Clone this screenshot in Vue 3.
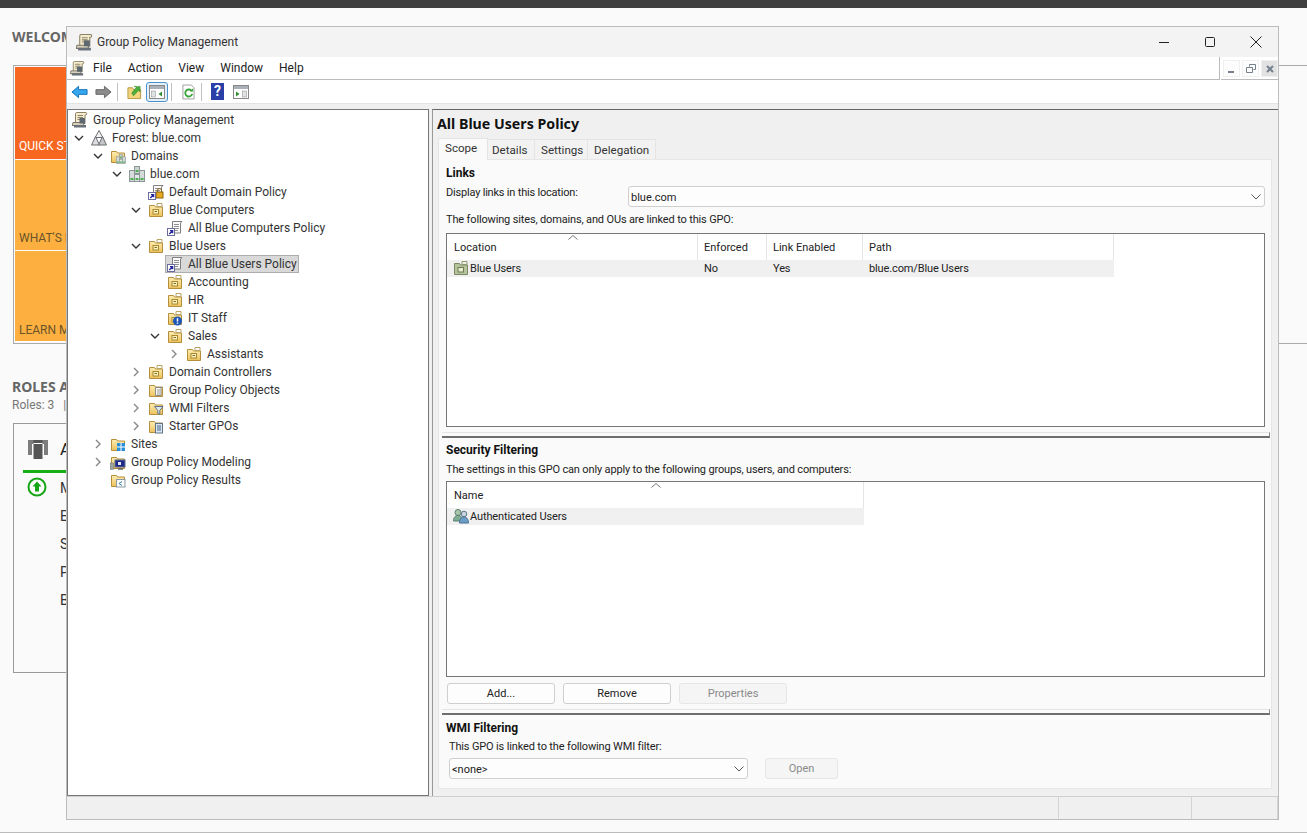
<script setup>
const tree = [
  { l: 0, t: 'Group Policy Management', i: 'scroll', c: '' },
  { l: 1, t: 'Forest: blue.com', i: 'forest', c: 'open' },
  { l: 2, t: 'Domains', i: 'domfolder', c: 'open' },
  { l: 3, t: 'blue.com', i: 'domain', c: 'open' },
  { l: 4, t: 'Default Domain Policy', i: 'gpolock', c: '' },
  { l: 4, t: 'Blue Computers', i: 'ou', c: 'open' },
  { l: 5, t: 'All Blue Computers Policy', i: 'gpo', c: '' },
  { l: 4, t: 'Blue Users', i: 'ou', c: 'open' },
  { l: 5, t: 'All Blue Users Policy', i: 'gpo', c: '', sel: true },
  { l: 5, t: 'Accounting', i: 'ou', c: '' },
  { l: 5, t: 'HR', i: 'ou', c: '' },
  { l: 5, t: 'IT Staff', i: 'ouwarn', c: '' },
  { l: 5, t: 'Sales', i: 'ou', c: 'open' },
  { l: 6, t: 'Assistants', i: 'ou', c: 'closed' },
  { l: 4, t: 'Domain Controllers', i: 'ou', c: 'closed' },
  { l: 4, t: 'Group Policy Objects', i: 'gpofolder', c: 'closed' },
  { l: 4, t: 'WMI Filters', i: 'wmi', c: 'closed' },
  { l: 4, t: 'Starter GPOs', i: 'starter', c: 'closed' },
  { l: 2, t: 'Sites', i: 'sites', c: 'closed' },
  { l: 2, t: 'Group Policy Modeling', i: 'modeling', c: 'closed' },
  { l: 2, t: 'Group Policy Results', i: 'results', c: '' }
]
const menus = ['File', 'Action', 'View', 'Window', 'Help']
const rowIndent = (l) => ({ paddingLeft: 4 + 19 * l + 'px' })
const roleItems = ['Manageability', 'Events', 'Services', 'Performance', 'BPA results']
</script>

<template>
  <div class="desktop">
    <svg class="sprite" width="0" height="0" aria-hidden="true">
      <defs>
        <linearGradient id="fold" x1="0" y1="0" x2="0" y2="1"><stop offset="0" stop-color="#fdeeb4"/><stop offset="1" stop-color="#ecc15c"/></linearGradient>
        <symbol id="folderBase" viewBox="0 0 16 16">
          <path d="M1.5 3.5h5l1 1.5h7v9.500h-13z" fill="url(#fold)" stroke="#b58f3c"/>
        </symbol>
        <symbol id="scroll" viewBox="0 0 16 16">
          <path d="M4.500 .5h9.500c1 0 1 2.500 0 2.500h-1v8.500h-9.500V3c0-1.500 0-2.500 1-2.500z" fill="#f5ecd0" stroke="#8d8468"/>
          <path d="M5.500 3.500h5.500M5.500 5.500h5.500M5.500 7.500h3" stroke="#8d8468"/>
          <path d="M1 10.500h10l1 3H0z" fill="#d8d2bb" stroke="#7c766a"/>
          <rect x="7.500" y="6" width="5.500" height="5.500" fill="#5d6770"/>
          <rect x="2" y="13" width="12" height="2.500" fill="#68707a"/>
        </symbol>
        <symbol id="forest" viewBox="0 0 16 16">
          <path d="M8 .5l3.800 7h-7.600z" fill="#f2f2f2" stroke="#6d6e72"/>
          <path d="M4.500 6.500l4 8.500H.5z" fill="#dcdde0" stroke="#6d6e72"/>
          <path d="M11.500 6.500l4 8.500h-8z" fill="#c4c5c9" stroke="#6d6e72"/>
        </symbol>
        <symbol id="servers" viewBox="0 0 16 16">
          <rect x="5.500" y=".5" width="5" height="7" fill="#cdd3d3" stroke="#8b9696"/>
          <rect x=".5" y="4.500" width="5" height="11" fill="#d5dbdb" stroke="#8b9696"/>
          <rect x="10.500" y="4.500" width="5" height="11" fill="#d5dbdb" stroke="#8b9696"/>
          <rect x="5.500" y="8.500" width="5" height="7" fill="#e2e7e7" stroke="#8b9696"/>
          <path d="M6.500 5h3M1.500 13h3M11.500 13h3M6.500 13h3" stroke="#4fae4f" stroke-width="2"/>
        </symbol>
        <symbol id="docBits" viewBox="0 0 16 16">
          <path d="M5.500 1.500h9.500l-1.500 1.500v10h-8z" fill="#fbfbfb" stroke="#7f7f7f"/>
          <path d="M7 4.500h5M7 6.500h5M7 8.500h5M7 10.500h4" stroke="#8f8f8f"/>
        </symbol>
        <symbol id="shortcut" viewBox="0 0 16 16">
          <rect x=".5" y="8.500" width="7" height="7" fill="#fff" stroke="#6c6c9c"/>
          <path d="M2.300 14l3-3M3 10.700h2.600v2.600" fill="none" stroke="#23239b" stroke-width="1.300"/>
        </symbol>
        <symbol id="ouPaper" viewBox="0 0 16 16">
          <rect x="5" y="7.500" width="5.500" height="4.500" fill="#fdf1bd" stroke="#a7882f"/>
          <path d="M6.500 9.500h2.500" stroke="#7f6a25"/>
          <path d="M9 1.500h5v3h-5z" fill="#fff" stroke="#b9a465"/>
        </symbol>
      </defs>
    </svg>

    <div class="topbar"></div>

    <main class="server-manager">
      <h2 class="sm-heading">WELCOME TO SERVER MANAGER</h2>
      <section class="welcome">
        <div class="tile orange">QUICK START</div>
        <div class="tile amber">WHAT'S NEW</div>
        <div class="tile amber last">LEARN MORE</div>
      </section>
      <h2 class="sm-heading roles-head">ROLES AND SERVER GROUPS</h2>
      <div class="roles-sub">Roles: 3 &nbsp;&nbsp;|&nbsp; Server groups: 1 &nbsp;|&nbsp; Servers total: 1</div>
      <section class="role-card">
        <div class="role-title">
          <svg class="role-icon" viewBox="0 0 20 20" width="20" height="20">
            <path d="M0 1h20v15h-4V5H4v11H0z" fill="#7c7c7c"/>
            <rect x="5.500" y="1" width="9" height="19" fill="#555"/>
            <rect x="5.500" y="4" width="9" height="1" fill="#fff"/>
          </svg>
          <span>AD DS</span>
        </div>
        <div class="role-rule"></div>
        <div class="role-items">
          <svg class="role-up" viewBox="0 0 20 20" width="20" height="20">
            <circle cx="10" cy="10" r="8.500" fill="#fff" stroke="#16a516" stroke-width="2"/>
            <path d="M10 4.500l4.500 5H12v5H8v-5H5.500z" fill="#16a516"/>
          </svg>
          <div class="role-list">
            <div v-for="r in roleItems" :key="r" class="role-item">{{ r }}</div>
          </div>
        </div>
      </section>
    </main>

    <div class="window">
      <header class="titlebar">
        <svg class="ic title-ic" viewBox="0 0 16 16"><use href="#scroll"/></svg>
        <span class="title-text">Group Policy Management</span>
        <div class="win-btns">
          <svg width="12" height="12" viewBox="0 0 12 12"><path d="M1 6.500h10" stroke="#222"/></svg>
          <svg width="12" height="12" viewBox="0 0 12 12"><rect x="1.500" y="1.500" width="9" height="9" rx="1" fill="none" stroke="#222"/></svg>
          <svg width="12" height="12" viewBox="0 0 12 12"><path d="M.5.500l11 11M11.500.500l-11 11" stroke="#222"/></svg>
        </div>
      </header>

      <div class="menubar">
        <nav class="menu-left">
          <svg class="ic menu-ic" viewBox="0 0 16 16"><use href="#scroll"/></svg>
          <span v-for="m in menus" :key="m" class="menu-item">{{ m }}</span>
        </nav>
        <div class="mdi">
          <span class="mdi-btn"><svg width="10" height="10" viewBox="0 0 10 10"><rect x="1" y="7" width="6" height="2" fill="#76808c"/></svg></span>
          <span class="mdi-btn"><svg width="10" height="10" viewBox="0 0 10 10"><path d="M3.500 2.500V.5h6v5h-2M.5 3.500h6v5h-6z" fill="none" stroke="#76808c"/></svg></span>
          <span class="mdi-btn dim"><svg width="10" height="10" viewBox="0 0 10 10"><path d="M2 2l6 6M8 2l-6 6" stroke="#76808c" stroke-width="2"/></svg></span>
        </div>
      </div>

      <div class="toolbar">
        <svg class="tb" width="17" height="16" viewBox="0 0 18 16"><path d="M1 8l7-6v3.500h9v5H8V14z" fill="#35a7ee" stroke="#0f6fb5"/></svg>
        <svg class="tb tb-fwd" width="17" height="16" viewBox="0 0 18 16"><path d="M17 8l-7-6v3.500H1v5h9V14z" fill="#8c8c8c" stroke="#666"/></svg>
        <i class="tb-sep"></i>
        <svg class="tb tb-up" width="15" height="16" viewBox="0 0 16 16"><path d="M1 3.500h5l1 2h7.500v9.500H1z" fill="#f3d67c" stroke="#b5963f"/><path d="M5 9l5-6-2.500-1H14v6l-1.500-2L7 12z" fill="#4caf3c" stroke="#2b7d22" stroke-width=".5"/></svg>
        <span class="tb-toggle">
          <svg width="16" height="14" viewBox="0 0 16 14"><rect x=".5" y=".5" width="15" height="13" fill="#fff" stroke="#888"/><rect x="1" y="1" width="14" height="3" fill="#a9b0b8"/><rect x="2.500" y="6" width="4" height="6" fill="#dfe3e3" stroke="#888" stroke-width=".5"/><path d="M13 6.500v5l-3.500-2.500z" fill="#2f8f2f"/></svg>
        </span>
        <i class="tb-sep sep-b"></i>
        <svg class="tb tb-ref" width="13" height="16" viewBox="0 0 14 16"><path d="M1 .5h9l3 3v12H1z" fill="#fff" stroke="#9a9a9a"/><path d="M10.500 7a3.800 3.800 0 1 0 .5 3" fill="none" stroke="#3aa53a" stroke-width="2"/><path d="M8.500 7.500h3.500V4z" fill="#3aa53a"/></svg>
        <i class="tb-sep sep-c"></i>
        <span class="tb-help">?</span>
        <svg class="tb tb-act" width="16" height="14" viewBox="0 0 16 14"><rect x=".5" y=".5" width="15" height="13" fill="#fff" stroke="#888"/><rect x="1" y="1" width="14" height="3" fill="#a9b0b8"/><rect x="9.500" y="6" width="4" height="6" fill="#dfe3e3" stroke="#888" stroke-width=".5"/><path d="M3 6.500v5l3.500-2.500z" fill="#2f8f2f"/></svg>
      </div>

      <div class="main">
        <aside class="tree">
          <div v-for="n in tree" :key="n.t" class="tree-row" :style="rowIndent(n.l)">
            <span class="chev">
              <svg v-if="n.c === 'open'" width="10" height="10" viewBox="0 0 10 10"><path d="M1 3l4 4 4-4" fill="none" stroke="#333" stroke-width="1.400"/></svg>
              <svg v-else-if="n.c === 'closed'" width="10" height="10" viewBox="0 0 10 10"><path d="M3 1l4 4-4 4" fill="none" stroke="#888" stroke-width="1.400"/></svg>
            </span>
            <span class="node" :class="{ selected: n.sel }">
              <svg class="ic" viewBox="0 0 16 16">
                <template v-if="n.i === 'scroll'"><use href="#scroll"/></template>
                <template v-else-if="n.i === 'forest'"><use href="#forest"/></template>
                <template v-else-if="n.i === 'domfolder'"><use href="#folderBase"/><g transform="translate(6 6) scale(.62)"><use href="#servers" width="16" height="16"/></g></template>
                <template v-else-if="n.i === 'domain'"><use href="#servers"/></template>
                <template v-else-if="n.i === 'gpolock'">
                  <use href="#docBits"/><rect x="8" y="8" width="7" height="6" fill="#e6a91f" stroke="#8a6510"/><path d="M9.500 8V6.500a2 2 0 0 1 4 0V8" fill="none" stroke="#8a6510"/><use href="#shortcut"/>
                </template>
                <template v-else-if="n.i === 'gpo'"><use href="#docBits"/><use href="#shortcut"/></template>
                <template v-else-if="n.i === 'ou'"><use href="#folderBase"/><use href="#ouPaper"/></template>
                <template v-else-if="n.i === 'ouwarn'">
                  <use href="#folderBase"/><use href="#ouPaper"/><circle cx="10.500" cy="11" r="4.500" fill="#1e56b8"/><path d="M10.500 8.300v3.200M10.500 12.500v1.200" stroke="#fff" stroke-width="1.500"/>
                </template>
                <template v-else-if="n.i === 'gpofolder'"><use href="#folderBase"/><path d="M7.500 5.500h6.500l-1 1v7h-5.500z" fill="#fafafa" stroke="#8b8b8b"/><path d="M9 8h3M9 10h3M9 12h3" stroke="#999"/></template>
                <template v-else-if="n.i === 'wmi'"><use href="#folderBase"/><path d="M6.500 6.500h8.500l-3.200 4v4l-2-1v-3z" fill="#dfe6ec" stroke="#5f7489"/></template>
                <template v-else-if="n.i === 'starter'"><use href="#folderBase"/><rect x="7.500" y="5.500" width="7" height="9.500" fill="#dbe7f4" stroke="#5f7489"/><path d="M9 8h4M9 10h4M9 12h4" stroke="#45627f"/></template>
                <template v-else-if="n.i === 'sites'"><use href="#folderBase"/><rect x="7" y="7" width="8" height="8" fill="#2a8fd6"/><path d="M11 7v8M7 11h8" stroke="#fff"/></template>
                <template v-else-if="n.i === 'modeling'">
                  <use href="#folderBase"/><rect x="0" y="9" width="3.500" height="6.500" fill="#9aa5a0" stroke="#6a7570" stroke-width=".5"/><rect x="5" y="6" width="10" height="7" fill="#1d2a8a" stroke="#5e6d8e"/><path d="M8 15h5" stroke="#666" stroke-width="1.500"/><rect x="8" y="8" width="3" height="3" fill="#e9e9f6"/>
                </template>
                <template v-else-if="n.i === 'results'"><use href="#folderBase"/><rect x="6.500" y="7.500" width="8.500" height="7.500" fill="#fbfbfb" stroke="#8b99a6"/><path d="M12 9.500l-3 2 3 2" fill="none" stroke="#2f7fa9"/></template>
              </svg>
              <span class="node-text">{{ n.t }}</span>
            </span>
          </div>
        </aside>

        <div class="vsplit"></div>

        <section class="detail">
          <h1 class="detail-title">All Blue Users Policy</h1>
          <div class="tabs">
            <span class="tab active">Scope</span>
            <span class="tab t-details">Details</span>
            <span class="tab t-settings">Settings</span>
            <span class="tab t-deleg">Delegation</span>
          </div>
          <div class="panel">
            <h3 class="sec-title sec-links">Links</h3>
            <div class="display-row">
              <span class="display-label">Display links in this location:</span>
              <div class="combo combo-wide">
                <span>blue.com</span>
                <svg width="10" height="6" viewBox="0 0 10 6"><path d="M.5.500L5 5l4.500-4.500" fill="none" stroke="#555"/></svg>
              </div>
            </div>
            <p class="sec-text t-links">The following sites, domains, and OUs are linked to this GPO:</p>
            <div class="listbox links-box">
              <div class="lhead links-cols">
                <span class="col sort">Location<svg class="caret caret-a" width="10" height="5" viewBox="0 0 10 5"><path d="M.5 4.500L5 .5l4.500 4" fill="none" stroke="#777"/></svg></span>
                <span class="col">Enforced</span>
                <span class="col">Link Enabled</span>
                <span class="col">Path</span>
              </div>
              <div class="lrow links-cols">
                <span class="cell cell-ic">
                  <svg class="ic" viewBox="0 0 16 16"><path d="M1.500 3.500h5l1 1.500h7v9.500h-13z" fill="#b5c49a" stroke="#7c8763"/><rect x="5" y="7.500" width="5.500" height="4.500" fill="#e5ecd2" stroke="#6d7a52"/><path d="M9 1.500h5v3h-5z" fill="#eef2e2" stroke="#8e9a74"/></svg>
                  <span>Blue Users</span>
                </span>
                <span class="cell">No</span>
                <span class="cell">Yes</span>
                <span class="cell">blue.com/Blue Users</span>
              </div>
            </div>

            <div class="hsplit split-a"></div>

            <h3 class="sec-title sec-sec">Security Filtering</h3>
            <p class="sec-text t-sec">The settings in this GPO can only apply to the following groups, users, and computers:</p>
            <div class="listbox sec-box">
              <div class="lhead name-cols">
                <span class="col sort">Name<svg class="caret caret-b" width="10" height="5" viewBox="0 0 10 5"><path d="M.5 4.500L5 .5l4.500 4" fill="none" stroke="#777"/></svg></span>
              </div>
              <div class="lrow name-cols">
                <span class="cell cell-ic">
                  <svg class="ic" viewBox="0 0 16 16"><circle cx="5" cy="4.500" r="3" fill="#a9c6a9" stroke="#5b7f73"/><path d="M.5 13c0-4 2-5.500 4.500-5.500S9.500 9 9.500 13z" fill="#7fae94" stroke="#5b7f73"/><circle cx="11" cy="6" r="2.800" fill="#c9d3dd" stroke="#5d7688"/><path d="M6.500 15c0-4 2-6 4.500-6s4.500 2 4.500 6z" fill="#6c9dc9" stroke="#4c7090"/></svg>
                  <span>Authenticated Users</span>
                </span>
              </div>
            </div>
            <div class="btn-row">
              <span class="btn">Add...</span>
              <span class="btn">Remove</span>
              <span class="btn off">Properties</span>
            </div>

            <div class="hsplit split-b"></div>

            <h3 class="sec-title sec-wmi">WMI Filtering</h3>
            <p class="sec-text t-wmi">This GPO is linked to the following WMI filter:</p>
            <div class="wmi-row">
              <div class="combo combo-wmi">
                <span>&lt;none&gt;</span>
                <svg width="10" height="6" viewBox="0 0 10 6"><path d="M.5.500L5 5l4.500-4.500" fill="none" stroke="#555"/></svg>
              </div>
              <span class="btn off open-btn">Open</span>
            </div>
          </div>
        </section>
      </div>

      <footer class="status">
        <i class="st st-a"></i><i class="st st-b"></i><i class="st st-c"></i>
      </footer>
    </div>

    <div class="page-end"></div>
  </div>
</template>

<style>
html, body { margin: 0; background: #fafafa; }
</style>

<style scoped>
* { box-sizing: border-box; }
.desktop {
  position: relative;
  width: 1307px;
  height: 833px;
  overflow: hidden;
  background: #fafafa;
  font-family: Roboto, "Noto Sans", sans-serif;
  font-size: 12px;
  color: #222;
}
.sprite { position: absolute; }
.topbar { height: 8px; background: #3f3f3f; }
.page-end { position: absolute; left: 0; right: 0; bottom: 0; height: 1px; background: #bbb; }

.server-manager { padding: 20px 0 0 12px; }
.sm-heading {
  margin: 0;
  height: 18px;
  line-height: 18px;
  font-family: "Noto Sans", sans-serif;
  font-size: 14px;
  font-weight: 700;
  color: #666;
  white-space: nowrap;
}
.welcome {
  margin: 19px 0 0 1px;
  width: 1400px;
  height: 279px;
  padding: 1px 0 1px 1px;
  border: 1px solid #aaa;
  border-right: 0;
  background: #fafafa;
}
.tile {
  width: 300px;
  height: 92px;
  padding: 71px 0 0 4px;
  line-height: 16px;
  font-size: 12px;
  color: #444;
}
.tile.orange { background: #f76720; color: #fff; }
.tile.amber { background: #fdb040; margin-top: 1px; color: #6b5328; height: 90px; padding-top: 70px; }
.tile.amber.last { padding-top: 71px; }
.roles-head { margin-top: 34px; }
.roles-sub { height: 18px; line-height: 18px; color: #777; font-size: 12px; white-space: nowrap; }
.role-card {
  margin: 9px 0 0 1px;
  width: 420px;
  height: 250px;
  border: 1px solid #999;
  padding: 14px 0 0 9px;
}
.role-title { display: flex; align-items: center; height: 22px; padding-left: 5px; font-size: 17px; color: #222; }
.role-title span { margin-left: 12px; }
.role-rule { margin-top: 10px; height: 3px; background: #16b016; width: 300px; }
.role-items { display: flex; padding: 2px 0 0 4px; }
.role-up { margin-top: 2px; }
.role-list { margin-left: 13px; margin-top: -1px; }
.role-item { height: 28px; line-height: 28px; font-size: 14px; color: #333; }

.window {
  position: absolute;
  left: 66px;
  top: 26px;
  width: 1213px;
  height: 794px;
  display: flex;
  flex-direction: column;
  border: 1px solid #bcbcbc;
  background: #f0f0f0;
}
.ic { width: 16px; height: 16px; flex: none; }
.titlebar { height: 30px; flex: none; display: flex; align-items: center; background: #f3f3f3; padding-left: 9px; }
.title-ic { width: 17px; height: 17px; }
.title-text { margin-left: 4px; color: #333; }
.win-btns { margin-left: auto; display: flex; gap: 34px; padding-right: 16px; }
.menubar { height: 23px; flex: none; display: flex; background: #fff; }
.menu-left { width: 1153px; display: flex; align-items: center; padding: 0 0 0 3px; background: #fff; border-right: 1px solid #bbb; border-bottom: 1px solid #bbb; }
.menu-ic { width: 15px; height: 15px; margin-right: 8px; }
.menu-item { margin-right: 16px; }
.mdi { flex: 1; display: flex; gap: 2px; padding: 3px 0 2px 2px; background: #fff; border-bottom: 1px solid #bbb; margin-left: 1px; }
.mdi-btn { width: 17px; height: 17px; display: flex; align-items: center; justify-content: center; background: #fdfdfd; box-shadow: inset 0 0 0 1px #f0f0f0; }
.mdi-btn.dim { background: #e2e2e2; }
.toolbar { height: 24px; flex: none; display: flex; align-items: center; padding-left: 4px; background: #fff; border-bottom: 1px solid #e4e4e4; }
.tb { flex: none; }
.tb-fwd { margin-left: 7px; }
.tb-sep { width: 1px; height: 18px; background: #c0c0c0; margin-left: 5px; }
.tb-up { margin-left: 9px; }
.tb-toggle { width: 22px; height: 20px; margin-left: 4px; display: flex; align-items: center; justify-content: center; background: #e3f0fb; border: 1px solid #4a92cf; border-radius: 3px; }
.sep-b { margin-left: 3px; }
.tb-ref { margin-left: 10px; }
.sep-c { margin-left: 6px; }
.tb-help { width: 13px; height: 17px; margin-left: 9px; background: #2a3fa8; color: #fff; font-weight: 700; font-size: 14px; line-height: 17px; text-align: center; }
.tb-act { margin-left: 9px; }

.main { flex: 1; min-height: 0; display: flex; margin-top: 5px; }
.tree { width: 362px; flex: none; background: #fff; border: 1px solid #777; padding-top: 1px; }
.tree-row { display: flex; align-items: center; height: 18px; white-space: nowrap; }
.chev { width: 0; display: flex; justify-content: center; align-items: center; position: relative; left: -12px; overflow: visible; flex: none; }
.chev svg { flex: none; }
.node { display: flex; align-items: center; height: 18px; margin-left: -2px; padding: 0 2px; color: #333; }
.node.selected { background: #d9d9d9; box-shadow: inset 0 0 0 1px #adadad; }
.node-text { margin-left: 5px; font-size: 12px; }
.vsplit { width: 3px; flex: none; background: #f0f0f0; }
.detail {
  flex: 1;
  min-width: 0;
  display: flex;
  flex-direction: column;
  border-top: 1px solid #666;
  border-left: 1px solid #999;
  background: #f0f0f0;
}
.detail-title { margin: 0; height: 28px; line-height: 28px; padding-left: 4px; font-family: "Noto Sans", sans-serif; font-size: 14.200px; font-weight: 700; color: #111; white-space: nowrap; }
.tabs { height: 21px; flex: none; display: flex; margin-left: 5px; align-items: flex-end; }
.tab { height: 20px; line-height: 20px; padding-left: 6px; background: #f2f2f2; border: 1px solid #e4e4e4; border-bottom: 0; border-left: 0; color: #333; font-size: 11.600px; }
.tab.active { width: 50px; height: 22px; line-height: 18px; padding-left: 6px; background: #fafafa; border-left: 1px solid #e4e4e4; margin-bottom: -1px; position: relative; z-index: 1; }
.t-details { width: 47px; padding-left: 4px; }
.t-settings { width: 53px; }
.t-deleg { width: 68px; }
.panel {
  margin: 0 6px 0 5px;
  height: 630px;
  padding: 1px 0 0 7px;
  background: #fafafa;
  border: 1px solid #e6e6e6;
}
.sec-title { margin: 0; height: 16px; line-height: 18px; font-size: 12px; font-weight: 700; color: #111; white-space: nowrap; }
.sec-links { margin-top: 3px; }
.sec-text { margin: 0; height: 16px; line-height: 18px; font-size: 11px; letter-spacing: -.15px; color: #222; white-space: nowrap; }
.display-row { display: flex; margin-top: 6px; height: 21px; padding-right: 6px; }
.display-label { width: 182px; line-height: 13px; font-size: 11px; letter-spacing: -.2px; }
.combo { display: flex; align-items: center; justify-content: space-between; height: 21px; padding: 1px 3px 0 2px; font-size: 11px; background: #fdfdfd; border: 1px solid #cfcfcf; border-radius: 3px; }
.combo-wide { flex: 1; }
.t-links { margin-top: 4px; }
.listbox { border: 1px solid #777; background: #fff; margin-right: 6px; }
.links-box { margin-top: 6px; height: 194px; }
.lhead { height: 26px; display: grid; }
.lrow { height: 17px; display: grid; background: #f0f0f0; }
.links-cols { grid-template-columns: 251px 69px 96px 251px; width: 667px; }
.name-cols { grid-template-columns: 417px; width: 417px; }
.col { position: relative; padding: 5px 0 0 6px; border-right: 1px solid #e5e5e5; line-height: 18px; font-size: 11px; }
.col:first-child { padding-left: 7px; }
.caret { position: absolute; top: 1px; }
.caret-a { left: 121px; }
.caret-b { left: 204px; }
.cell { display: flex; align-items: center; padding: 0 0 2px 6px; line-height: 15px; font-size: 11px; letter-spacing: -.12px; white-space: nowrap; }
.cell-ic .ic { margin-right: 1px; }
.hsplit { height: 6px; margin: 5px 1px 0 -4px; border-top: 1px solid #e4e4e4; border-bottom: 2px solid #6e6e6e; border-right: 1px solid #888; }
.sec-sec { margin-top: 3px; }
.t-sec { margin-top: 4px; }
.sec-box { margin-top: 4px; height: 196px; }
.btn-row { display: flex; gap: 8px; margin-top: 6px; padding-left: 1px; }
.btn { width: 108px; height: 21px; padding-top: 1px; line-height: 18px; text-align: center; font-size: 11px; background: #fdfdfd; border: 1px solid #cfcfcf; border-radius: 3px; }
.btn.off { color: #8a8a8a; background: #f5f5f5; border-color: #e6e6e6; }
.split-b { margin-top: 5px; }
.sec-wmi { margin-top: 4px; }
.t-wmi { margin-top: 3px; padding-left: 3px; }
.wmi-row { display: flex; margin-top: 4px; padding-left: 3px; gap: 17px; }
.combo-wmi { width: 299px; }
.open-btn { width: 73px; }

.status { height: 23px; flex: none; display: flex; border-top: 1px solid #cfcfcf; background: #f0f0f0; position: relative; }
.st { width: 1px; height: 22px; background: #d4d4d4; display: block; }
.st-a { margin-left: 991px; }
.st-b { margin-left: 132px; }
.st-c { margin-left: 85px; }
</style>
